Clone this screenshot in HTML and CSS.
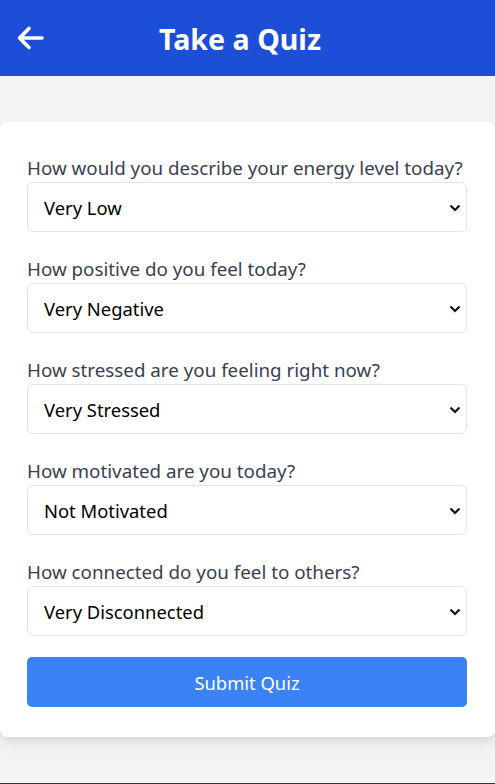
FILE: index.html
```html
<!DOCTYPE html>
<html>
<head>
<meta charset="utf-8">
<link rel="stylesheet" href="styles.css">
</head>
<body>
<header class="topbar">
  <a class="back" href="#" aria-label="Back">
    <svg width="28" height="26" viewBox="0 0 28 26"><path d="M26 13H4M13 3.5L3.5 13L13 22.5" fill="none" stroke="#fff" stroke-width="3.6" stroke-linecap="round" stroke-linejoin="round"/></svg>
  </a>
  <h1 class="title">Take a Quiz</h1>
</header>
<main class="main">
  <form class="card">
    <div class="field">
      <label class="label">How would you describe your energy level today?</label>
      <div class="select-wrap">
        <select class="select"><option>Very Low</option><option>Low</option><option>Moderate</option><option>High</option><option>Very High</option></select>
        <svg class="chev" width="12" height="8" viewBox="0 0 12 8"><path d="M1.5 1.5L6 6L10.5 1.5" fill="none" stroke="#111" stroke-width="2.2"/></svg>
      </div>
    </div>
    <div class="field">
      <label class="label">How positive do you feel today?</label>
      <div class="select-wrap">
        <select class="select"><option>Very Negative</option></select>
        <svg class="chev" width="12" height="8" viewBox="0 0 12 8"><path d="M1.5 1.5L6 6L10.5 1.5" fill="none" stroke="#111" stroke-width="2.2"/></svg>
      </div>
    </div>
    <div class="field">
      <label class="label">How stressed are you feeling right now?</label>
      <div class="select-wrap">
        <select class="select"><option>Very Stressed</option></select>
        <svg class="chev" width="12" height="8" viewBox="0 0 12 8"><path d="M1.5 1.5L6 6L10.5 1.5" fill="none" stroke="#111" stroke-width="2.2"/></svg>
      </div>
    </div>
    <div class="field">
      <label class="label">How motivated are you today?</label>
      <div class="select-wrap">
        <select class="select"><option>Not Motivated</option></select>
        <svg class="chev" width="12" height="8" viewBox="0 0 12 8"><path d="M1.5 1.5L6 6L10.5 1.5" fill="none" stroke="#111" stroke-width="2.2"/></svg>
      </div>
    </div>
    <div class="field last">
      <label class="label">How connected do you feel to others?</label>
      <div class="select-wrap">
        <select class="select"><option>Very Disconnected</option></select>
        <svg class="chev" width="12" height="8" viewBox="0 0 12 8"><path d="M1.5 1.5L6 6L10.5 1.5" fill="none" stroke="#111" stroke-width="2.2"/></svg>
      </div>
    </div>
    <button type="button" class="submit">Submit Quiz</button>
  </form>
</main>
<div class="bottom-line"></div>
</body>
</html>
```
FILE: styles.css
```css
* { box-sizing: border-box; }
html, body { margin: 0; padding: 0; }
body {
  background: #f3f4f6;
  font-family: "Noto Sans", "Open Sans", sans-serif;
  height: 784px;
  overflow: hidden;
  display: flex;
  flex-direction: column;
}
.topbar {
  height: 76px;
  background: #1d4ed8;
  display: flex;
  align-items: center;
  padding: 0 16px;
}
.back {
  display: flex;
  width: 28px;
  height: 26px;
  margin-top: -1px;
}
.title {
  flex: 1;
  margin: 0 43px 0 0;
  text-align: center;
  color: #fff;
  font-size: 28.6px;
  font-weight: 700;
  letter-spacing: 0;
}
.main {
  flex: 1;
  padding-top: 46px;
}
.card {
  background: #fff;
  border-radius: 8px;
  box-shadow: 0 8px 16px rgba(0,0,0,0.08), 0 2px 6px rgba(0,0,0,0.05);
  padding: 32px 28px 30px 27px;
  margin: 0;
}
.field { margin-bottom: 23px; }
.field.last { margin-bottom: 21px; }
.label {
  display: block;
  height: 28px;
  line-height: 28px;
  font-size: 18.8px;
  color: #374151;
  white-space: nowrap;
}
.select-wrap { position: relative; }
.select {
  appearance: none;
  -webkit-appearance: none;
  width: 100%;
  height: 50px;
  border: 1px solid #e2e4e8;
  border-radius: 6px;
  background: #fff;
  padding: 0 40px 0 16px;
  font-family: inherit;
  font-size: 18.4px;
  color: #000;
}
.chev {
  position: absolute;
  right: 6px;
  top: 22px;
  pointer-events: none;
}
.submit {
  display: block;
  width: 100%;
  height: 50px;
  border: 0;
  border-radius: 5px;
  background: #3b82f6;
  color: #fff;
  font-family: inherit;
  font-size: 18.4px;
}
.bottom-line {
  height: 1px;
  background: #333;
}
```
